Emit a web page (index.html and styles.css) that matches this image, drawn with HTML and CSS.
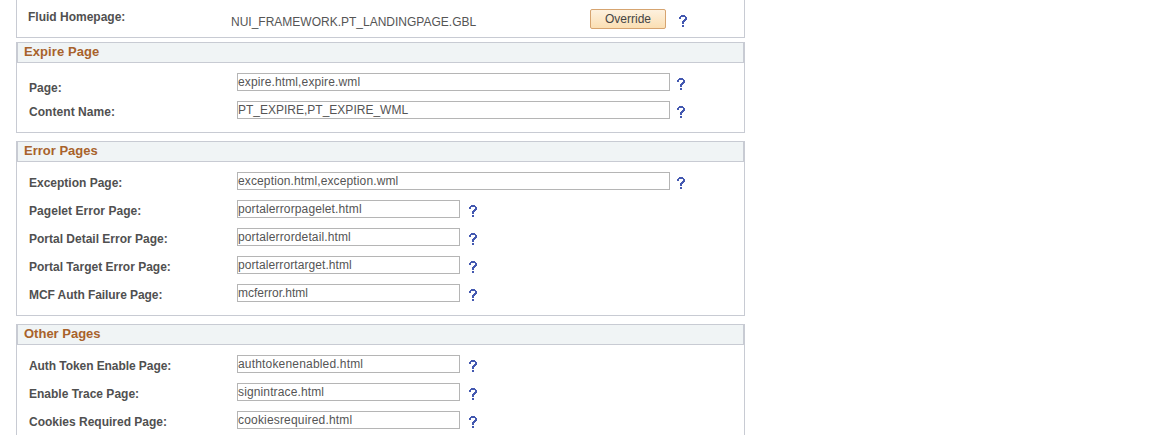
FILE: index.html
```
<!DOCTYPE html>
<html lang="en">
<head>
<meta charset="utf-8">
<title>Web Profile</title>
<link rel="stylesheet" href="styles.css">
</head>
<body>
<svg width="0" height="0" class="defs"><symbol id="help" viewBox="0 0 8 12" shape-rendering="crispEdges"><path d="M2 0h4v1h1v1h1v3h-1v1h-1v1h-1v2h-2v-3h1v-1h1v-1h1v-2h-4v2h-2v-2h1v-1h1zM3 10h2v2h-2z"/></symbol></svg>
<main class="page">
<section class="panel homepage">
<div class="row"><label>Fluid Homepage:</label><span class="value">NUI_FRAMEWORK.PT_LANDINGPAGE.GBL</span><button class="override">Override</button><svg class="help"><use href="#help"/></svg></div>
</section>
<section class="panel expire">
<h2 class="open">Expire Page</h2>
<div class="row first"><label>Page:</label><input class="wide" value="expire.html,expire.wml"><svg class="help"><use href="#help"/></svg></div>
<div class="row"><label class="loose">Content Name:</label><input class="wide plain" value="PT_EXPIRE,PT_EXPIRE_WML"><svg class="help"><use href="#help"/></svg></div>
</section>
<section class="panel errors">
<h2>Error Pages</h2>
<div class="row"><label>Exception Page:</label><input class="wide" value="exception.html,exception.wml"><svg class="help"><use href="#help"/></svg></div>
<div class="row"><label class="loose">Pagelet Error Page:</label><input value="portalerrorpagelet.html"><svg class="help"><use href="#help"/></svg></div>
<div class="row"><label>Portal Detail Error Page:</label><input value="portalerrordetail.html"><svg class="help"><use href="#help"/></svg></div>
<div class="row"><label>Portal Target Error Page:</label><input class="snug" value="portalerrortarget.html"><svg class="help"><use href="#help"/></svg></div>
<div class="row"><label class="tight">MCF Auth Failure Page:</label><input class="plain" value="mcferror.html"><svg class="help"><use href="#help"/></svg></div>
</section>
<section class="panel others">
<h2>Other Pages</h2>
<div class="row"><label class="tight">Auth Token Enable Page:</label><input class="spread" value="authtokenenabled.html"><svg class="help"><use href="#help"/></svg></div>
<div class="row"><label>Enable Trace Page:</label><input value="signintrace.html"><svg class="help"><use href="#help"/></svg></div>
<div class="row"><label>Cookies Required Page:</label><input class="spread" value="cookiesrequired.html"><svg class="help"><use href="#help"/></svg></div>
</section>
</main>
</body>
</html>
```
FILE: styles.css
```
* { box-sizing: border-box; }
body { margin: 0; background: #fff; font-family: "Liberation Sans", Arial, sans-serif; font-size: 12px; color: #555; height: 435px; overflow: hidden; }
.defs { display: block; height: 0; }
.page { width: 729px; margin-left: 16px; }
.panel { border: 1px solid #c8cbd3; }
.homepage { height: 38px; border-top: 0; margin-bottom: 4px; }
.expire { height: 91px; margin-bottom: 8px; }
.errors { height: 175px; margin-bottom: 8px; }
.others { height: 125px; }
h2 { margin: 0 0 10px; height: 20px; padding-left: 6px; border: 1px solid #c8cbd3; border-top: 0; background: #f0f4f5; color: #a8622b; font-size: 13px; line-height: 18px; }
.open { letter-spacing: 0.08px; }
.row { display: flex; height: 28px; padding-left: 12px; }
label { width: 208px; padding-top: 4px; font-weight: bold; line-height: 14px; color: #505050; }
.loose { letter-spacing: 0.05px; }
.tight { letter-spacing: -0.07px; }
.first label { padding-top: 8px; }
input { width: 223px; height: 18px; padding: 0; border: 1px solid #b5b5b5; border-radius: 0; background: #fff; font: 12px/16px "Liberation Sans", Arial, sans-serif; letter-spacing: 0.13px; color: #555; outline: 0; }
.wide { width: 433px; }
.plain { letter-spacing: 0; }
.snug { letter-spacing: 0.08px; }
.spread { letter-spacing: 0.18px; }
.help { width: 8px; height: 12px; margin: 5px 0 0 9px; fill: #4358b0; flex: none; }
.wide + .help { margin-left: 7px; }
.homepage .row { padding-left: 11px; }
.homepage label { width: 203px; padding-top: 10px; }
.value { width: 359px; padding-top: 15px; line-height: 14px; }
.override { width: 76px; height: 20px; margin-top: 9px; padding: 0; border: 1px solid #d6a470; border-radius: 2px; background: linear-gradient(#fdf1df, #fbdfb3); font: 12px/18px "Liberation Sans", Arial, sans-serif; color: #444; }
.homepage .help { margin: 15px 0 0 13px; }
```
